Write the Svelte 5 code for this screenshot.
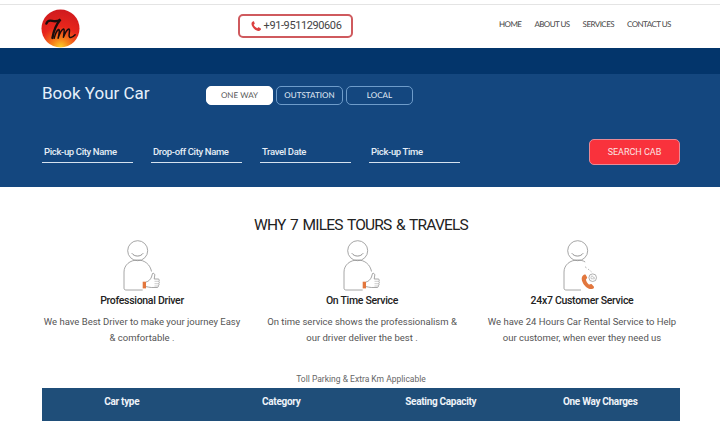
<script>
  const tabs = [
    { label: 'ONE WAY', active: true },
    { label: 'OUTSTATION', active: false },
    { label: 'LOCAL', active: false }
  ]
  const fields = ['Pick-up City Name', 'Drop-off City Name', 'Travel Date', 'Pick-up Time']
  const nav = ['HOME', 'ABOUT US', 'SERVICES', 'CONTACT US']
  const features = [
    {
      title: 'Professional Driver',
      icon: 'thumb',
      lines: ['We have Best Driver to make your journey Easy', '& comfortable .']
    },
    {
      title: 'On Time Service',
      icon: 'thumb',
      lines: ['On time service shows the professionalism &', 'our driver deliver the best .']
    },
    {
      title: '24x7 Customer Service',
      icon: 'phone',
      lines: ['We have 24 Hours Car Rental Service to Help', 'our customer, when ever they need us']
    }
  ]
  const columns = ['Car type', 'Category', 'Seating Capacity', 'One Way Charges']
</script>

<div class="page">
  <header class="header">
    <svg class="logo" viewBox="0 0 40 40" aria-label="7m logo">
      <defs>
        <radialGradient id="ball" cx="0.5" cy="1" r="1">
          <stop offset="0" stop-color="#fcd32a" />
          <stop offset="0.22" stop-color="#f6841a" />
          <stop offset="0.55" stop-color="#e8261c" />
          <stop offset="1" stop-color="#cf1a1e" />
        </radialGradient>
      </defs>
      <circle cx="20" cy="20" r="19.500" fill="url(#ball)" />
      <path d="M5.500 15c1-3 3-3.500 6-2.800 3 .7 6 .5 8.500-1.500-3.500 4-7 11-8.300 19" fill="none" stroke="#1a0c0c" stroke-width="2.400" stroke-linecap="round" />
      <path d="M13.500 30c1-4 2.500-8 4.500-9 1.500-.7.5 5-.5 9 1.500-4.500 3.500-9 5.500-9.500 1.500-.3.500 5 0 8.500 1.500-4 3.500-8 5.500-8.500 1.500-.3.300 4.500.3 7 0 2.500 3 2.500 6.200-1" fill="none" stroke="#1a0c0c" stroke-width="1.500" stroke-linecap="round" stroke-linejoin="round" />
    </svg>
    <div class="phone">
      <svg class="phone-icon" viewBox="0 0 24 24">
        <path d="M6.600 2.500c-1 .3-3.400 1.800-3.600 4.500-.2 3 1.600 6.800 4.600 10 3 3.100 6.700 5 9.800 4.800 2.600-.2 4.300-2.500 4.600-3.500.2-.6 0-1.100-.5-1.400l-3.900-2.300c-.5-.3-1.100-.2-1.500.2l-1.600 1.700c-1.500-.5-3-1.500-4.300-2.800-1.300-1.300-2.300-2.800-2.800-4.300l1.700-1.600c.4-.4.5-1 .2-1.500L8 3c-.3-.5-.8-.7-1.400-.5z" fill="#dc3f3f" />
      </svg>
      <span>+91-9511290606</span>
    </div>
    <nav class="nav">
      {#each nav as item}
        <span>{item}</span>
      {/each}
    </nav>
  </header>

  <div class="band"></div>

  <section class="booking">
    <div class="booking-top">
      <h2>Book Your Car</h2>
      <div class="tabs">
        {#each tabs as tab}
          <div class="tab" class:active={tab.active}>{tab.label}</div>
        {/each}
      </div>
    </div>
    <div class="booking-form">
      <div class="fields">
        {#each fields as field}
          <div class="field">{field}</div>
        {/each}
      </div>
      <button class="search">SEARCH CAB</button>
    </div>
  </section>

  <section class="why">
    <h1>WHY 7 MILES TOURS &amp; TRAVELS</h1>
    <div class="features">
      {#each features as feature}
        <div class="feature">
          <svg class="person" viewBox="0 0 50 52" fill="none">
            <circle cx="20.700" cy="10.700" r="10" stroke="#8f8f8f" stroke-width="0.800" />
            <path d="M15 13.500c2.500 3.500 8.500 3.500 11 0" stroke="#777" stroke-width="0.800" stroke-linecap="round" />
            {#if feature.icon === 'thumb'}
              <path d="M25.700 50H9c-1.300 0-2-.7-2-2V32c0-7 6-12 13.700-12 7 0 12.500 4.500 13.800 11.500" stroke="#8f8f8f" stroke-width="0.800" stroke-linejoin="round" />
              <rect x="25.700" y="41.700" width="3.300" height="6.700" fill="#e2773e" />
              <path d="M29 42c2.500-.5 4.500-2.500 5.500-5l1-3.500c1-.6 2.300.2 2.300 1.500l-.6 4h4c1.300 0 1.300 1.800.5 2.300.8.500.8 1.900 0 2.300.5.500.4 1.800-.4 2.100.2.800-.2 1.800-1 1.800h-6c-1.800 0-3.200-.6-5.300-.9" stroke="#8f8f8f" stroke-width="0.800" stroke-linejoin="round" />
              <path d="M37.500 41.300h4M37.500 43.700h4M37.500 46h3.500" stroke="#ababab" stroke-width="0.600" />
            {:else}
              <path d="M24 50H9c-1.300 0-2-.7-2-2V32c0-7 6-12 13.700-12 3 0 5.500.7 7.500 2" stroke="#8f8f8f" stroke-width="0.800" stroke-linejoin="round" />
              <path d="M27.500 34.500c-2.800 1.200-3.500 4-2 7.500 1.700 4 5.500 7.500 9.300 7 1.700-.2 2.700-1.500 2-2.600l-2.300-2.300c-.8-.6-1.700.7-2.600.3-1.300-.7-3-3.500-2.900-4.800.1-.9 1.600-1.300 1.100-2.400l-1.300-2.300c-.3-.5-.7-.6-1.300-.4z" fill="#e2773e" />
              <circle cx="35.700" cy="37.700" r="3.800" stroke="#8f8f8f" stroke-width="0.700" />
              <path d="M34 38.700v-2l1.200-1 .8 1.500 1.300.2v1.500z" stroke="#999" stroke-width="0.500" />
              <path d="M28 26.700l1.500 1.200M31 29l1.300 1.100M33.500 31l1 .9" stroke="#a5a5a5" stroke-width="0.800" />
            {/if}
          </svg>
          <h3>{feature.title}</h3>
          {#each feature.lines as line}
            <p>{line}</p>
          {/each}
        </div>
      {/each}
    </div>
    <p class="note">Toll Parking &amp; Extra Km Applicable</p>
    <div class="table-head">
      {#each columns as col}
        <div>{col}</div>
      {/each}
    </div>
  </section>
</div>

<style>
  :global(body) {
    margin: 0;
    background: #fff;
  }

  .page {
    width: 720px;
    height: 425px;
    overflow: hidden;
    font-family: Roboto, "Noto Sans", sans-serif;
    color: #333;
  }

  .header {
    display: flex;
    align-items: center;
    height: 43px;
    margin-top: 4px;
    border-top: 1px solid #e4e4e4;
    padding-left: 41px;
  }

  .logo {
    width: 39px;
    height: 39px;
    flex: none;
    margin-top: 3px;
  }

  .phone {
    display: flex;
    align-items: center;
    justify-content: center;
    gap: 2px;
    flex: none;
    width: 111px;
    height: 20px;
    margin-left: 158px;
    margin-top: -2px;
    border: 2px solid #cf5a5e;
    border-radius: 5px;
    font-size: 11px;
    letter-spacing: -0.400px;
    color: #444;
  }

  .phone-icon {
    width: 12px;
    height: 12px;
  }

  .nav {
    display: flex;
    gap: 13px;
    margin-left: 146px;
    margin-top: -6px;
    font-family: Lato, Roboto, sans-serif;
    font-size: 8px;
    letter-spacing: -0.550px;
    text-rendering: geometricPrecision;
    color: #444;
  }

  .band {
    height: 26px;
    background: #03356b;
  }

  .booking {
    height: 113px;
    padding: 0 40px 0 42px;
    background: #14477f;
    color: #fff;
  }

  .booking-top {
    display: flex;
    align-items: flex-start;
    padding-top: 12px;
  }

  h2 {
    width: 164px;
    margin: -2px 0 0;
    font-size: 17px;
    font-weight: 400;
    line-height: 18px;
    color: #e6f0fa;
  }

  .tabs {
    display: flex;
    gap: 3px;
  }

  .tab {
    width: 65px;
    height: 17px;
    border: 1px solid #6e9cca;
    border-radius: 5px;
    font-family: Lato, Roboto, sans-serif;
    font-size: 8px;
    line-height: 17px;
    letter-spacing: 0.050px;
    text-align: center;
    text-rendering: geometricPrecision;
    color: #e4eef8;
  }

  .tab.active {
    background: #fff;
    border-color: #fff;
    color: #555;
  }

  .booking-form {
    display: flex;
    justify-content: space-between;
    align-items: flex-start;
    margin-top: 34px;
  }

  .fields {
    display: flex;
    gap: 18px;
  }

  .field {
    width: 89px;
    height: 23px;
    padding-left: 2px;
    border-bottom: 1px solid #d5e2ef;
    font-size: 9.500px;
    font-weight: 500;
    line-height: 25px;
    letter-spacing: -0.350px;
    color: #e6eef7;
  }

  .search {
    width: 91px;
    height: 26px;
    padding: 0;
    border: 1px solid #e98a96;
    border-radius: 5px;
    background: #f9323c;
    font-family: inherit;
    font-size: 9px;
    color: #fbe4e4;
  }

  .why {
    padding: 0 40px 0 42px;
  }

  h1 {
    margin: 29px 0 0;
    font-size: 15.500px;
    font-weight: 400;
    line-height: 18px;
    letter-spacing: -0.800px;
    word-spacing: 1.500px;
    text-align: center;
    color: #222;
  }

  .features {
    display: flex;
    margin: 6px -12px 0 -10px;
  }

  .feature {
    flex: 1;
    text-align: center;
  }

  .person {
    display: block;
    width: 50px;
    height: 52px;
    margin: 0 auto;
  }

  h3 {
    margin: 2px 0 6px;
    font-size: 10.500px;
    font-weight: 500;
    line-height: 14px;
    letter-spacing: -0.300px;
    color: #222;
  }

  .feature p {
    margin: 0;
    font-size: 9.500px;
    line-height: 16px;
    color: #555;
  }

  .note {
    margin: 27px 0 3px;
    font-size: 8.500px;
    line-height: 12px;
    text-align: center;
    color: #666;
  }

  .table-head {
    display: grid;
    grid-template-columns: repeat(4, 1fr);
    height: 33px;
    background: #1f4e79;
    font-size: 10px;
    font-weight: 700;
    line-height: 27px;
    letter-spacing: -0.300px;
    text-align: center;
    color: #eef3f8;
  }
</style>
